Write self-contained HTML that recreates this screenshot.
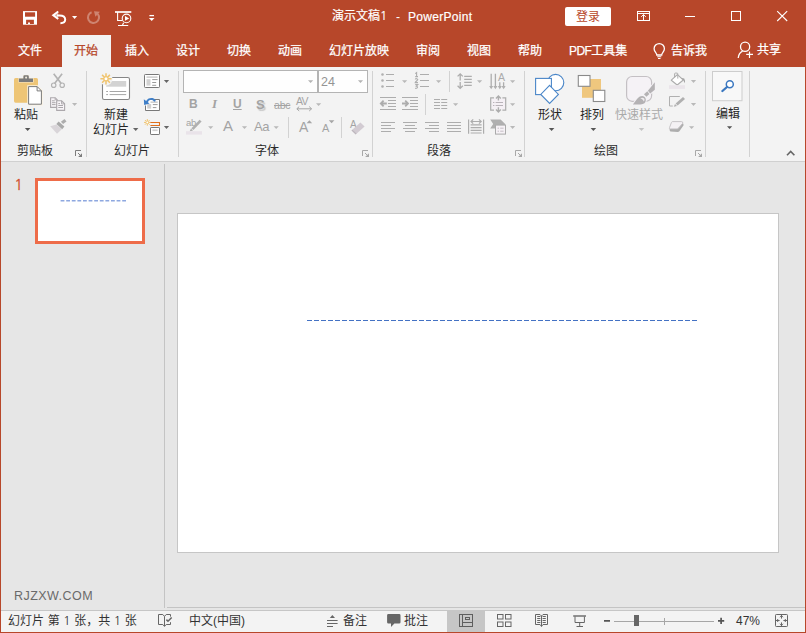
<!DOCTYPE html>
<html lang="zh-CN">
<head>
<meta charset="utf-8">
<title>演示文稿1 - PowerPoint</title>
<style>
*{box-sizing:border-box;margin:0;padding:0}
html,body{width:806px;height:633px;overflow:hidden;background:#e6e6e6}
body{font-family:"Liberation Sans","Noto Sans CJK SC",sans-serif;font-size:12px;color:#262626;position:relative}
#win{position:absolute;left:0;top:0;width:806px;height:633px;background:#e6e6e6;overflow:hidden}
#win div{position:absolute}
.t{white-space:nowrap;line-height:16px;height:16px}
#tabs .t{top:43px;color:#fff;-webkit-text-stroke:0.25px currentColor}
#titlebar{left:0;top:0;width:806px;height:67px;background:#b7472a}
#acttab{left:62px;top:35px;width:49px;height:32px;background:#f3f3f3}
#ribbon{left:1px;top:67px;width:804px;height:95px;background:#f3f3f3;border-bottom:1px solid #d0d0d0}
.vsep{width:1px;background:#d2d2d2;top:71px;height:86px}
.glabel{top:143px;color:#2b2b2b}
.gray{color:#aaa}
.ic{color:#a3a3a3;font-family:"Liberation Sans",sans-serif}
#status{left:1px;top:610px;width:804px;height:22px;background:#f3f3f3;border-top:1px solid #c6c6c6}
#status .t{top:2px;color:#333}
.nn span{font-family:"NanumGothic",sans-serif}
#icons{position:absolute;left:0;top:0;width:806px;height:633px;overflow:visible}
</style>
</head>
<body>
<div id="win">
  <div id="titlebar"></div>
  <div class="t" style="left:332px;top:8px;color:#fff;-webkit-text-stroke:0.2px #fff">演示文稿<span style="font-family:'NanumGothic',sans-serif">1</span></div>
  <div class="t" style="left:396px;top:9px;color:#fff">-</div>
  <div class="t" style="left:408px;top:9px;color:#fff;letter-spacing:0.3px;-webkit-text-stroke:0.2px #fff">PowerPoint</div>
  <div style="left:565px;top:7px;width:46px;height:19px;background:#fff;border-radius:2px"></div>
  <div class="t" style="left:576px;top:9px;color:#b7472a">登录</div>

  <div id="acttab"></div>
  <div id="tabs">
    <div class="t" style="left:18px">文件</div>
    <div class="t" style="left:74px;color:#b7472a">开始</div>
    <div class="t" style="left:125px">插入</div>
    <div class="t" style="left:176px">设计</div>
    <div class="t" style="left:227px">切换</div>
    <div class="t" style="left:278px">动画</div>
    <div class="t" style="left:329px">幻灯片放映</div>
    <div class="t" style="left:416px">审阅</div>
    <div class="t" style="left:467px">视图</div>
    <div class="t" style="left:518px">帮助</div>
    <div class="t" style="left:569px"><span style="letter-spacing:-0.6px">PDF</span>工具集</div>
    <div class="t" style="left:671px">告诉我</div>
    <div class="t" style="left:757px;top:42px">共享</div>
  </div>

  <div id="ribbon"></div>
  <div class="vsep" style="left:86px"></div>
  <div class="vsep" style="left:178px"></div>
  <div class="vsep" style="left:372px"></div>
  <div class="vsep" style="left:524px"></div>
  <div class="vsep" style="left:705px"></div>
  <div class="vsep" style="left:749px"></div>
  <div class="vsep" style="left:288px;top:117px;height:21px"></div>
  <div class="vsep" style="left:341px;top:117px;height:21px"></div>
  <div class="vsep" style="left:449px;top:71px;height:21px"></div>
  <div class="vsep" style="left:425px;top:94px;height:21px"></div>

  <div class="t glabel" style="left:17px">剪贴板</div>
  <div class="t glabel" style="left:114px">幻灯片</div>
  <div class="t glabel" style="left:255px">字体</div>
  <div class="t glabel" style="left:427px">段落</div>
  <div class="t glabel" style="left:594px">绘图</div>

  <div class="t" style="left:14px;top:107px">粘贴</div>
  <div class="t" style="left:104px;top:107px">新建</div>
  <div class="t" style="left:93px;top:122px">幻灯片</div>
  <div class="t" style="left:538px;top:107px">形状</div>
  <div class="t" style="left:580px;top:107px">排列</div>
  <div class="t gray" style="left:615px;top:107px">快速样式</div>
  <div class="t" style="left:716px;top:106px">编辑</div>

  <!-- font name / size boxes -->
  <div style="left:183px;top:70px;width:135px;height:23px;background:#fefefe;border:1px solid #b4b4b4"></div>
  <div style="left:318px;top:70px;width:50px;height:23px;background:#fefefe;border:1px solid #b4b4b4"></div>
  <div class="t" style="left:321px;top:74px;font-size:12.5px;color:#949494">24</div>

  <!-- font buttons (letters) -->
  <div class="t ic" style="left:189px;top:96px;font-weight:bold;font-size:12px">B</div>
  <div class="t ic" style="left:212px;top:96px;font-family:'Liberation Serif',serif;font-style:italic;font-weight:bold;font-size:13px">I</div>
  <div class="t ic" style="left:233px;top:96px;font-weight:bold;font-size:12px;text-decoration:underline;text-underline-offset:1px;text-decoration-thickness:1px">U</div>
  <div class="t ic" style="left:256px;top:97px;font-weight:bold;font-size:13px;text-shadow:1.5px 1.5px 1px #c8c8c8">S</div>
  <div class="t ic" style="left:274px;top:97px;font-size:10.5px;text-decoration:line-through;letter-spacing:-0.2px">abc</div>
  <div class="t ic" style="left:296px;top:93px;font-size:10.5px;letter-spacing:-0.8px">AV</div>
  <div class="t ic" style="left:186px;top:115px;font-size:9.5px;letter-spacing:-0.3px">ab</div>
  <div class="t ic" style="left:223px;top:118px;font-size:15px">A</div>
  <div class="t ic" style="left:254px;top:119px;font-size:13px;letter-spacing:-0.3px">Aa</div>
  <div class="t ic" style="left:299px;top:119px;font-size:14px">A</div>
  <div class="t ic" style="left:322px;top:120px;font-size:11px">A</div>
  <div class="t ic" style="left:350px;top:117px;font-size:10px">A</div>
  <div class="t ic" style="left:498px;top:69px;font-size:10.5px;color:#ababab">A</div>

  <!-- workspace -->
  <div style="left:164px;top:164px;width:1px;height:444px;background:#c4c4c4"></div>
  <div style="left:167px;top:607px;width:638px;height:1px;background:#c4c4c4"></div>
  <div class="t" style="left:14.2px;top:174px;font-size:14.5px;line-height:22px;height:22px;color:#d24e2c;font-family:'NanumGothic',sans-serif;-webkit-text-stroke:0.3px #d24e2c">1</div>
  <div style="left:35px;top:178px;width:110px;height:66px;background:#fff;border:3px solid #ee6c49"></div>
  <div style="left:177px;top:213px;width:602px;height:340px;background:#fff;border:1px solid #c6c6c6"></div>
  <div class="t" style="left:14px;top:588px;font-size:12.5px;color:#6a6a6a;letter-spacing:0.45px">RJZXW.COM</div>

  <!-- status bar -->
  <div id="status">
    <div style="left:446px;top:0;width:38px;height:21px;background:#c6c6c6"></div>
    <div class="t nn" style="left:7px;top:2px;word-spacing:0.3px">幻灯片 第 <span>1</span> 张，共 <span>1</span> 张</div>
    <div class="t" style="left:188px">中文(中国)</div>
    <div class="t" style="left:342px">备注</div>
    <div class="t" style="left:403px">批注</div>
    <div class="t" style="left:735px">47%</div>
  </div>
  <svg id="icons" width="806" height="633" viewBox="0 0 806 633">
    <!-- ===== title bar icons ===== -->
    <g fill="none" stroke="#fff">
      <!-- save -->
      <rect x="23" y="11.1" width="14" height="13.6" fill="#fff" stroke="none"/>
      <rect x="25" y="12.3" width="10.1" height="4.4" fill="#b7472a" stroke="none"/>
      <path d="M26.1,19.7H33.9V24H30V22.4H28V24H26.1Z" fill="#b7472a" stroke="none"/>
      <!-- undo -->
      <path d="M58.2,11.6L53.2,15.2L58.2,18.9" stroke-width="1.9" fill="#fff" fill-opacity="0.55"/>
      <path d="M57,15.4H59.5C63.4,15.4 65.2,17.3 65.2,19.6C65.2,21.9 63.3,23.2 60.4,23.3" stroke-width="2"/>
      <path d="M72,16H77.2L74.6,19Z" fill="#fff" stroke="none"/>
      <!-- redo (disabled) -->
      <g opacity="0.33">
        <path d="M91.6,12.3A5.5,5.5 0 1 0 97.7,13.9" stroke-width="2"/>
        <path d="M94,11.2L99.9,11.7L95.4,16.8Z" fill="#fff" stroke="none"/>
      </g>
      <!-- slideshow from beginning -->
      <path d="M115,12H131.3" stroke-width="1.7"/>
      <path d="M117.6,12V20.5H122.2" stroke-width="1.1"/>
      <circle cx="126.5" cy="18.4" r="4.3" stroke-width="1.1" fill="#b7472a"/>
      <path d="M125,16V20.8L129.2,18.4Z" fill="#fff" stroke="none"/>
      <path d="M123.6,22.8L122.4,25.4M118,25.5H128.2" stroke-width="1.1"/>
      <!-- customize QAT -->
      <path d="M149.4,15.6H154" stroke-width="1.3"/>
      <path d="M148.9,18H154.5L151.7,21.1Z" fill="#fff" stroke="none"/>
      <!-- ribbon display options -->
      <rect x="637.5" y="11.5" width="12" height="9" stroke-width="1"/>
      <path d="M637.5,13.5H649.5M643.5,14.6V20.5M641.2,16.8L643.5,14.6L645.8,16.8" stroke-width="1"/>
      <!-- window buttons -->
      <path d="M685,16.5H695" stroke-width="1"/>
      <rect x="731.5" y="11.5" width="9" height="9" stroke-width="1"/>
      <path d="M777.2,11.2L787.2,21M787.2,11.2L777.2,21" stroke-width="1.1"/>
      <!-- tell me lightbulb -->
      <path d="M656.8,55C656.8,52.6 654.1,51.8 654.1,48.7A5.15,5.15 0 0 1 664.4,48.7C664.4,51.8 661.7,52.6 661.7,55Z" stroke-width="1.3"/>
      <path d="M657.2,56.8H661.3M658,58.5H660.5" stroke-width="1.1"/>
      <!-- share person -->
      <circle cx="745.1" cy="46.8" r="4.6" stroke-width="1.3"/>
      <path d="M738.2,58C738.6,54.6 740.4,52.2 742.6,51.2" stroke-width="1.3"/>
      <path d="M746.2,54.3H753M749.5,51.4V57.9" stroke-width="1.2"/>
    </g>
    <!-- ===== clipboard group ===== -->
    <g>
      <!-- paste -->
      <rect x="14" y="78" width="24" height="24.7" rx="1.6" fill="#eec576"/>
      <path d="M18.4,82.6V78H23V76.2Q23,74.9 24.3,74.9H27.9Q29.2,74.9 29.2,76.2V78H33.6V82.6Z" fill="#f7ead0"/>
      <path d="M18.9,81.9V78.5H23.4V76.4Q23.4,75.2 24.6,75.2H27.6Q28.8,75.2 28.8,76.4V78.5H33V81.9Z" fill="#7b7b7b"/>
      <circle cx="26.1" cy="77.6" r="1.05" fill="#f1e9da"/>
      <path d="M28.6,86.6H37.2L41.4,90.8V104.2H28.6Z" fill="#fff" stroke="#fbf3e2" stroke-width="2.6"/>
      <path d="M28.6,86.6H37.2L41.4,90.8V104.2H28.6Z" fill="#fff" stroke="#7a7a7a" stroke-width="1"/>
      <path d="M37.1,86.7V90.9H41.3" fill="none" stroke="#7a7a7a" stroke-width="1"/>
      <path d="M24.9,128H30.4L27.65,131.1Z" fill="#555"/>
      <!-- cut -->
      <g fill="none" stroke="#b3b3b3">
        <path d="M53.7,73.8L61.2,83.4M62.1,73.8L54.6,83.4" stroke-width="1.7"/>
        <circle cx="53.7" cy="85.2" r="2.2" stroke-width="1.2"/>
        <circle cx="62.2" cy="85.2" r="2.2" stroke-width="1.2"/>
      </g>
      <!-- copy -->
      <g fill="#f8f5f8" stroke="#aca8ac" stroke-width="1.1">
        <path d="M50.6,97.7H55.2L57.2,99.7V107.4H50.6Z"/>
        <path d="M55.1,97.8V99.8H57.1" fill="none" stroke-width="0.9"/>
        <path d="M52,100.8H54.8M52,102.7H55.6M52,104.6H55.6" fill="none" stroke-width="1"/>
        <path d="M56.7,100.8H61.6L64.6,103.8V110.4H56.7Z"/>
        <path d="M61.5,100.9V103.9H64.5" fill="none" stroke-width="0.9"/>
        <path d="M58.3,103.6H60M58.3,105.5H63M58.3,107.5H63" fill="none" stroke-width="1"/>
      </g>
      <path d="M72,103H77.2L74.6,106Z" fill="#b9b9b9"/>
      <!-- format painter -->
      <path d="M50.2,126.2L56.4,124.4L61.8,129.2L57,133.8Z" fill="#d9d5d9"/>
      <path d="M56.4,124L58.6,121.6L64.4,126.6L62.2,129.2Z" fill="#a9a9a9"/>
      <path d="M60.9,121.7L64.5,119L66.5,121.4L63.1,124.1Z" fill="#adadad"/>
      <!-- launcher -->
      <path d="M75.5,156V150.5H81" fill="none" stroke="#7c7c7c" stroke-width="1"/>
      <path d="M82,153.2V157H78.1Z" fill="#7c7c7c"/>
      <path d="M78,153L81.5,156.5" fill="none" stroke="#7c7c7c" stroke-width="1"/>
    </g>
    <!-- ===== slides group ===== -->
    <g>
      <!-- new slide -->
      <rect x="102.5" y="77.5" width="27" height="22" rx="1.8" fill="#fff" stroke="#868686" stroke-width="1.1"/>
      <rect x="106.2" y="81" width="20" height="5.7" fill="#d3d3d3"/>
      <path d="M106.2,91.5H108M109.6,91.5H126.2M106.2,94.6H108M109.6,94.6H126.2" fill="none" stroke="#a6a6a6" stroke-width="1"/>
      <circle cx="106" cy="78.8" r="6.6" fill="#f3f3f3"/>
      <path d="M100.4,78.8H111.6M106,73.2V84.4M102.1,74.9L109.9,82.7M109.9,74.9L102.1,82.7" fill="none" stroke="#f0c46e" stroke-width="1.5"/>
      <circle cx="106" cy="78.8" r="2.1" fill="#fff" stroke="#f0c46e" stroke-width="1.1"/>
      <path d="M133,127.9H138.4L135.7,130.9Z" fill="#666"/>
      <!-- layout -->
      <rect x="144.5" y="74.5" width="15" height="13" rx="0.8" fill="#fff" stroke="#787878" stroke-width="1"/>
      <rect x="146.5" y="76.3" width="11" height="1.7" fill="#d2d2d2"/>
      <rect x="146.5" y="79.2" width="4" height="6.4" fill="#d2d2d2"/>
      <path d="M152.2,79.6H157.6M152.2,82.5H156.2M152.2,85.3H156.2" fill="none" stroke="#9a9a9a" stroke-width="1"/>
      <path d="M163.9,80.1H169.1L166.5,83Z" fill="#666"/>
      <!-- reset -->
      <path d="M150,99.5H159.5V110.5H145.5V105.5" fill="#fff" stroke="#787878" stroke-width="1"/>
      <rect x="150.5" y="101.4" width="7.2" height="1.6" fill="#cfcfcf"/>
      <rect x="147.2" y="104" width="4" height="4.6" fill="#cfcfcf"/>
      <path d="M152.8,104.6H157.6M152.8,107.6H156.4" fill="none" stroke="#9a9a9a" stroke-width="1"/>
      <path d="M146.6,102.4C147.6,99.6 150.2,98.4 152.4,99C153.8,99.4 154.6,100.3 155,101.4" fill="none" stroke="#3f7fc8" stroke-width="1.9"/>
      <path d="M143.8,99.2L144.2,105L149.6,103.6Z" fill="#3f7fc8"/>
      <!-- section -->
      <path d="M144,122.4H150.6M147.3,119.1V125.7M145,120.1L149.6,124.7M149.6,120.1L145,124.7" fill="none" stroke="#f0c46e" stroke-width="1"/>
      <circle cx="147.3" cy="122.4" r="1.3" fill="#fff" stroke="#f0c46e" stroke-width="0.8"/>
      <path d="M150.4,122.5H159.5V125.5H150.4" fill="none" stroke="#e0701c" stroke-width="1.05"/>
      <rect x="150.5" y="127.5" width="9" height="7" rx="0.6" fill="#fff" stroke="#787878" stroke-width="1"/>
      <rect x="152.4" y="129.4" width="5.2" height="1.7" fill="#cfcfcf"/>
      <path d="M163.9,126.1H169.1L166.5,129Z" fill="#666"/>
    </g>
    <!-- ===== font group ===== -->
    <g>
      <path d="M308,80.3H313.2L310.6,83Z" fill="#b4b4b4"/>
      <path d="M357.9,80.3H363.1L360.5,83Z" fill="#b4b4b4"/>
      <!-- char spacing arrow -->
      <path d="M297,108.8H311.4M299.2,106.6L296.8,108.8L299.2,111M309.2,106.6L311.6,108.8L309.2,111" fill="none" stroke="#a6a6a6" stroke-width="1"/>
      <path d="M316,103.2H321.2L318.6,106Z" fill="#b9b9b9"/>
      <!-- highlight pen -->
      <path d="M199.6,119.8L201.6,121.6L193.4,130L191.4,128.2Z" fill="#b0b0b0"/>
      <path d="M191,128.6L193,130.4L189.6,131.4Z" fill="#b0b0b0"/>
      <rect x="186" y="131.2" width="16" height="3.4" fill="#e9e3e9"/>
      <path d="M208.1,126.2H213.3L210.7,129Z" fill="#b9b9b9"/>
      <path d="M241.9,126.2H247.1L244.5,129Z" fill="#b9b9b9"/>
      <path d="M273.6,126.2H278.8L276.2,129Z" fill="#b9b9b9"/>
      <!-- grow / shrink -->
      <path d="M306.6,123.2L309.4,120.2L312.2,123.2Z" fill="#a6a6a6"/>
      <path d="M328.8,120.2H334.4L331.6,123.2Z" fill="#a6a6a6"/>
      <!-- clear formatting eraser -->
      <path d="M352.6,129.4L360.4,122.4L364.6,126.4L356.8,133.4Z" fill="#d2cbd2"/>
      <path d="M352.6,129.4L356.8,133.4L355.6,134.4L351.4,130.4Z" fill="#bdb6bd"/>
      <!-- launcher -->
      <path d="M362.5,156V150.5H368" fill="none" stroke="#a8a8a8" stroke-width="1"/>
      <path d="M369,153.2V157H365.1Z" fill="#a8a8a8"/>
      <path d="M365,153L368.5,156.5" fill="none" stroke="#a8a8a8" stroke-width="1"/>
    </g>
    <!-- ===== paragraph group ===== -->
    <g fill="none" stroke="#adadad" stroke-width="1.2">
      <!-- bullets -->
      <path d="M386,74.5H394M386,80.5H394M386,86.5H394"/>
      <g fill="#b0b0b0" stroke="none"><circle cx="382.5" cy="74.5" r="1.3"/><circle cx="382.5" cy="80.5" r="1.3"/><circle cx="382.5" cy="86.5" r="1.3"/></g>
      <!-- numbering -->
      <path d="M420,74.5H429M420,80.5H429M420,86.5H429"/>
      <g stroke-width="1.1">
        <path d="M415.2,73.6L416.6,72.6V76.6M415.2,76.6H418"/>
        <path d="M415.2,79.4C415.6,78.4 417.8,78.4 417.8,79.6C417.8,80.6 415.4,81.4 415.2,82.6H418"/>
        <path d="M415.2,84.6H417.8L416.4,86.2C418,86.2 418.2,88.6 415.2,88.4"/>
      </g>
      <!-- indent decrease -->
      <path d="M380,97.5H396M380,109.5H396M388,100.5H396M388,103.5H396M388,106.5H396"/>
      <path d="M380.8,103.5H386.8M383.6,100.7L380.8,103.5L383.6,106.3" stroke-width="1.8"/>
      <!-- indent increase -->
      <path d="M402,97.5H418M402,109.5H418M410,100.5H418M410,103.5H418M410,106.5H418"/>
      <path d="M402,103.5H408M405.2,100.7L408,103.5L405.2,106.3" stroke-width="1.8"/>
      <!-- columns -->
      <path d="M434,99.5H440M434,102.5H440M434,105.5H440M434,108.5H440M441.2,99.5H447.2M441.2,102.5H447.2M441.2,105.5H447.2M441.2,108.5H447.2"/>
      <!-- align left / center / right / justify -->
      <path d="M381,122.5H395M381,125.5H391M381,128.5H395M381,131.5H391"/>
      <path d="M403,122.5H417M405,125.5H415M403,128.5H417M405,131.5H415"/>
      <path d="M425,122.5H439M429,125.5H439M425,128.5H439M429,131.5H439"/>
      <path d="M447,122.5H461M447,125.5H461M447,128.5H461M447,131.5H461"/>
      <!-- distributed -->
      <path d="M468.6,119.4V133.8M483.6,119.4V133.8"/>
      <path d="M470.6,124.9H481.6M470.6,127.6H481.6M470.6,130.3H481.6M470.6,133H481.6" stroke-width="1.2"/>
      <path d="M471,121.5H481.2M473.2,119.3L471,121.5L473.2,123.7M479,119.3L481.2,121.5L479,123.7" stroke-width="1.2"/>
      <!-- line spacing -->
      <path d="M464.2,76.3H471.8M464.2,79.3H471.8M464.2,82.3H471.8M464.2,85.3H471.8"/>
      <path d="M460.2,74V80.4M460.2,82V88.2M457.6,76.4L460.2,73.8L462.8,76.4M457.6,85.8L460.2,88.4L462.8,85.8" stroke-width="1.3"/>
      <!-- text direction -->
      <path d="M491.2,73.8V88M495.4,73.8V88M499.8,82.2V88M503.6,82.2V88" stroke-width="1.3"/>
      <g fill="#b0b0b0" stroke="none">
        <path d="M489.2,86H493.2L491.2,89.2Z"/><path d="M493.4,86H497.4L495.4,89.2Z"/><path d="M497.8,86H501.8L499.8,89.2Z"/><path d="M501.6,86H505.6L503.6,89.2Z"/>
      </g>
      <!-- align text -->
      <rect x="491.4" y="98.6" width="13.6" height="10.8" fill="#f5f0f5" stroke="none"/>
      <path d="M494,97.9H490.7V110.1H494M502.4,97.9H505.7V110.1H502.4"/>
      <path d="M493,102.5H494.4M495.6,102.5H503M493,105.5H494.4M495.6,105.5H503" stroke-width="1" stroke="#b9b3b9"/>
      <path d="M498.4,96V100.6M496,98.4L498.4,96L500.8,98.4M498.4,107.2V112M496,109.6L498.4,112L500.8,109.6" stroke-width="1.4"/>
      <!-- smartart -->
      <path d="M490.2,119.4H500.6L505.2,124V125H495V128.4H490.2L493.2,124Z" fill="#b0b0b0" stroke="none"/>
      <rect x="495.5" y="125.1" width="10" height="9" fill="#f6f2f6" stroke="#aaa" stroke-width="1"/>
      <path d="M497.6,128.2H499M500.2,128.2H503.6M497.6,131.2H499M500.2,131.2H503.6" stroke="#c0b8c0" stroke-width="0.9"/>
    </g>
    <g fill="#b9b9b9">
      <path d="M402,80.2H407.2L404.6,83Z"/><path d="M436,80.2H441.2L438.6,83Z"/>
      <path d="M477,80.2H482.2L479.6,83Z"/><path d="M510,80.2H515.2L512.6,83Z"/>
      <path d="M453,103.2H458.2L455.6,106Z"/><path d="M510,103.2H515.2L512.6,106Z"/>
      <path d="M510,126.1H515.2L512.6,128.9Z"/>
    </g>
    <path d="M515.5,156V150.5H521" fill="none" stroke="#a8a8a8" stroke-width="1"/>
    <path d="M522,153.2V157H518.1Z" fill="#a8a8a8"/>
    <path d="M518,153L521.5,156.5" fill="none" stroke="#a8a8a8" stroke-width="1"/>

    <!-- ===== drawing group ===== -->
    <g>
      <!-- shapes -->
      <circle cx="555.6" cy="82.6" r="8.2" fill="#fff" stroke="#4a86c8" stroke-width="1.1"/>
      <rect x="535.6" y="78.4" width="15.8" height="16.2" fill="#fff" stroke="#4a86c8" stroke-width="1.1"/>
      <path d="M549.6,85.4L558.4,94.4L549.6,103.4L540.8,94.4Z" fill="#fff" stroke="#4a86c8" stroke-width="1.1"/>
      <path d="M548.8,127.9H554.4L551.6,131Z" fill="#555"/>
      <!-- arrange -->
      <rect x="582" y="79" width="19" height="18.8" fill="#efc77e"/>
      <rect x="578.3" y="75.5" width="11.7" height="10.8" fill="#fff" stroke="#8a8a8a" stroke-width="1.1"/>
      <rect x="593.3" y="90.3" width="11.5" height="11.2" fill="#fff" stroke="#8a8a8a" stroke-width="1.1"/>
      <path d="M590.6,127.9H596.2L593.4,131Z" fill="#555"/>
      <!-- quick styles -->
      <rect x="626.6" y="76.5" width="25" height="24.8" rx="5.5" fill="#f5f2f6" stroke="#c4c0c4" stroke-width="1.2"/>
      <g stroke="#f4f2f5" stroke-width="2" stroke-linejoin="round" fill="#f4f2f5">
        <path d="M654.8,82.3V89.8L650.2,93.6L647.9,90.8Z"/>
        <path d="M647.3,91.3L649.4,94L646.4,96.7L644,94.3Z"/>
        <path d="M632.9,104.5C635.2,101.6 637.2,98.2 639.8,96.6C642.6,95 645.6,96.6 645.8,99.4C646,101.6 645,103 643.4,103.8C640.4,104.8 636.4,104.6 632.9,104.5Z"/>
      </g>
      <g fill="#b4b2b4">
        <path d="M654.8,82.3V89.8L650.2,93.6L647.9,90.8Z"/>
        <path d="M647.3,91.3L649.4,94L646.4,96.7L644,94.3Z"/>
        <path d="M632.9,104.5C635.2,101.6 637.2,98.2 639.8,96.6C642.6,95 645.6,96.6 645.8,99.4C646,101.6 645,103 643.4,103.8C640.4,104.8 636.4,104.6 632.9,104.5Z"/>
      </g>
      <path d="M640.2,98.6C641.4,97.4 643.2,97.4 644.2,98.6C644.8,99.6 644.6,100.8 643.8,101.6C643.4,100 641.8,98.8 640.2,98.6Z" fill="#efecef"/>
      <path d="M638.8,128H644.2L641.5,130.9Z" fill="#c4c4c4"/>
      <!-- shape fill -->
      <path d="M671.3,80.2L677.4,74.6L683.3,80L677.2,85Z" fill="#fff" stroke="#adadad" stroke-width="1.1" stroke-linejoin="round"/>
      <path d="M674.6,77.4V73.9Q674.6,73.1 675.4,73.1H677Q677.8,73.1 677.8,73.9V78.6" fill="none" stroke="#adadad" stroke-width="1"/>
      <path d="M681.4,78L684.2,78.6Q685.4,80.8 684.8,83.2Q683.8,81.4 683.3,80Z" fill="#a2a2a2"/>
      <rect x="669" y="85.2" width="16" height="3.7" fill="#eae5ea"/>
      <path d="M690.9,80.1H696.1L693.5,82.9Z" fill="#b9b9b9"/>
      <!-- shape outline -->
      <path d="M679.8,96.5H669.5V106H672.8" fill="none" stroke="#b0b0b0" stroke-width="1"/>
      <path d="M683,97L685,99L677.6,105.4L675.6,103.4Z" fill="#b0b0b0"/>
      <path d="M675,104L677,106L673.8,106.8Z" fill="#b0b0b0"/>
      <path d="M690.9,103.1H696.1L693.5,105.9Z" fill="#b9b9b9"/>
      <!-- shape effects -->
      <path d="M670.4,131.6Q669.2,130.4 669.6,128.8L683,123.2Q683.8,124.4 683.4,125.6L679.4,131.2Q678.8,132 677.8,132Z" fill="#adadad"/>
      <path d="M672.6,121.6H681.4Q683.4,121.6 682.6,123.4L678.6,128Q678,128.9 677,128.9H670.2Q668.8,128.9 669.6,127.4L671.4,122.6Q671.8,121.6 672.6,121.6Z" fill="#f4f1f4" stroke="#c2bec2" stroke-width="0.9"/>
      <path d="M689,126.2H694.2L691.6,129Z" fill="#b9b9b9"/>
      <!-- launcher -->
      <path d="M695.5,156V150.5H701" fill="none" stroke="#a8a8a8" stroke-width="1"/>
      <path d="M702,153.2V157H698.1Z" fill="#a8a8a8"/>
      <path d="M698,153L701.5,156.5" fill="none" stroke="#a8a8a8" stroke-width="1"/>
      <!-- editing -->
      <rect x="712.5" y="71.5" width="29.5" height="29.2" fill="#f8f8f8" stroke="#cdcdcd" stroke-width="1"/>
      <circle cx="729.8" cy="84.2" r="3.5" fill="#fff" stroke="#3b78c0" stroke-width="1.5"/>
      <path d="M727,87L722.4,91" fill="none" stroke="#3b78c0" stroke-width="2.3" stroke-linecap="round"/>
      <path d="M727,126.2H732.2L729.6,129Z" fill="#555"/>
      <path d="M787,155.2L790.7,151.4L794.4,155.2" fill="none" stroke="#666" stroke-width="1.6"/>
    </g>
    <!-- ===== status bar icons ===== -->
    <g fill="none" stroke="#666" stroke-width="1">
      <!-- spelling -->
      <path d="M164.5,616.4V626.2M164.5,616.4L162.8,614.5H158.5V624.5H162.8L164.5,626.4L166.2,624.5H170.5V622.2M170.5,616.6V614.5H166.2L164.5,616.4"/>
      <path d="M166.4,619.6L168,621.2L171.7,617.4" stroke-width="1.5"/>
      <!-- notes -->
      <path d="M327,620.5H337.6M327,623.5H337.6M327,626.5H333"/>
      <path d="M329.8,618L332.4,615L335,618Z" fill="#666" stroke="none"/>
      <!-- comment -->
      <path d="M388.4,614H399.2Q400.5,614 400.5,615.3V622.2Q400.5,623.5 399.2,623.5H394.4L391,627V623.5H388.4Q387.1,623.5 387.1,622.2V615.3Q387.1,614 388.4,614Z" fill="#666" stroke="none"/>
      <!-- normal view -->
      <rect x="459.5" y="614.5" width="13" height="12" stroke="#5e5e5e"/>
      <path d="M462.5,614.5V626.5M462.5,622.5H472.5" stroke="#5e5e5e"/>
      <rect x="465.5" y="617.5" width="4" height="2" stroke="#5e5e5e"/>
      <!-- sorter -->
      <rect x="497.5" y="614.5" width="5.5" height="4.5"/><rect x="505.5" y="614.5" width="5.5" height="4.5"/>
      <rect x="497.5" y="622" width="5.5" height="4.5"/><rect x="505.5" y="622" width="5.5" height="4.5"/>
      <!-- reading view -->
      <path d="M541.5,616V626.4M541.5,616L540,614.5H535.5V624.5H540L541.5,626.4L543,624.5H547.5V614.5H543L541.5,616"/>
      <path d="M537.2,616.5H540.4M537.2,618.5H540.4M537.2,620.5H540.4M537.2,622.5H540.4M542.6,616.5H545.8M542.6,618.5H545.8M542.6,620.5H545.8M542.6,622.5H545.8" stroke-width="1"/>
      <!-- slideshow -->
      <path d="M573.2,616H586" stroke-width="1.4"/>
      <path d="M575,616.5V622.5H584.4V616.5M579.7,622.5V626.5M576.5,626.5H583"/>
      <!-- zoom -->
      <path d="M604,620.8H610M718,620.8H724.2M721.1,617.7V623.9" stroke="#555" stroke-width="1.7"/>
      <path d="M614,621.5H714" stroke="#a6a6a6"/>
      <path d="M664.5,618V625" stroke="#a6a6a6"/>
      <rect x="634" y="615" width="5" height="11" fill="#666" stroke="none"/>
      <!-- fit -->
      <rect x="775.5" y="614.5" width="12" height="12" rx="0.8"/>
      <path d="M781.5,614.5V618.6M780,617.2L781.5,615.7L783,617.2M781.5,626.5V622.4M780,623.8L781.5,625.3L783,623.8M775.5,620.5H779.6M778.2,619L776.7,620.5L778.2,622M787.5,620.5H783.4M784.8,619L786.3,620.5L784.8,622" stroke-width="1"/>
    </g>
    <!-- slide content -->
    <path d="M307,320.5H697" stroke="#4472c4" stroke-width="1.2" stroke-dasharray="5 2" fill="none"/>
    <path d="M60.6,200.7H126" stroke="#8ea8e0" stroke-width="1.4" stroke-dasharray="3.8 1.8" fill="none"/>
  </svg>
  <!-- window border -->
  <div style="left:0;top:0;width:1px;height:633px;background:#b7472a"></div>
  <div style="left:805px;top:0;width:1px;height:633px;background:#b7472a"></div>
  <div style="left:0;top:632px;width:806px;height:1px;background:#b7472a"></div>
</div>
</body>
</html>
